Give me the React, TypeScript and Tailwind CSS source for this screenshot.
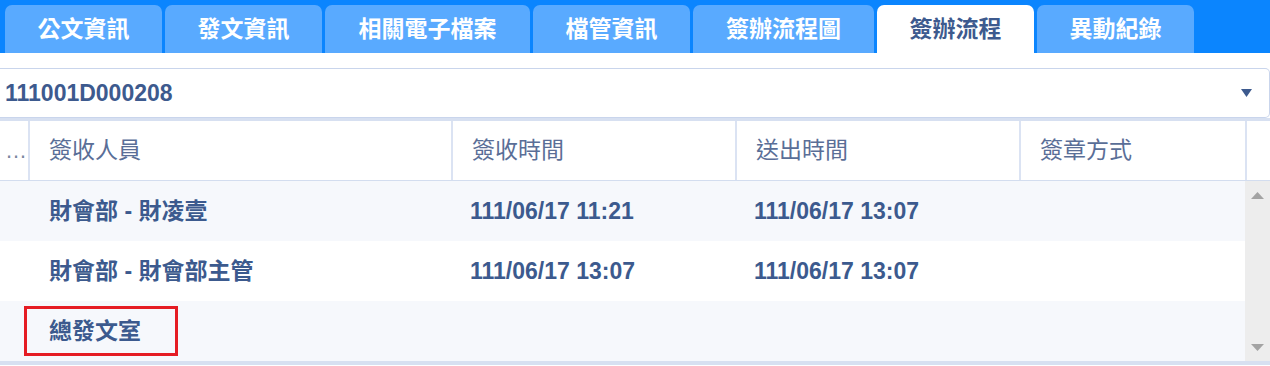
const tabs = [
  { label: '公文資訊', w: 'w-[157px]' },
  { label: '發文資訊', w: 'w-[157px]' },
  { label: '相關電子檔案', w: 'w-[205px]' },
  { label: '檔管資訊', w: 'w-[157px]' },
  { label: '簽辦流程圖', w: 'w-[181px]' },
  { label: '簽辦流程', w: 'w-[157px]', active: true },
  { label: '異動紀錄', w: 'w-[157px]' },
];

const rows = [
  { who: '財會部 - 財凌壹', recv: '111/06/17 11:21', sent: '111/06/17 13:07', method: '' },
  { who: '財會部 - 財會部主管', recv: '111/06/17 13:07', sent: '111/06/17 13:07', method: '' },
  { who: '總發文室', recv: '', sent: '', method: '', marked: true },
];

const font = "font-['Liberation_Sans','Noto_Sans_CJK_TC',sans-serif]";

function TabBar() {
  return (
    <div className="flex h-[53px] items-end gap-[3px] bg-[#0b85fe] pl-[5px]">
      {tabs.map((t) => (
        <div
          key={t.label}
          className={`flex h-[48px] items-center justify-center rounded-t-[7px] text-[23px] font-bold ${t.w} ${
            t.active ? 'bg-white text-[#3d5a8e]' : 'bg-[#59aaff] text-white'
          }`}
        >
          {t.label}
        </div>
      ))}
    </div>
  );
}

function DocSelect() {
  return (
    <div className="mt-[15px] flex h-[50px] items-center rounded-r-[5px] border-y border-r border-[#c9d5ec] pr-[17px] pl-[5px]">
      <span className="flex-1 text-[23px] font-bold text-[#3d5a8e]">111001D000208</span>
      <svg width="11" height="8" viewBox="0 0 11 8">
        <path d="M0 0 L11 0 L5.5 8 Z" fill="#3d5a8e" />
      </svg>
    </div>
  );
}

function SignTable() {
  return (
    <div className="border-t-[3px] border-b-[4px] border-[#d7e0f1]">
      <div className="grid h-[60px] grid-cols-[28px_423px_284px_284px_226px_25px] border-b-[1px] border-[#d3ddef] text-[23px] text-[#5a6e97]">
        <div className="flex items-center pl-[5px] text-[22px] text-[#7a879f]">…</div>
        <div className="flex items-center border-l-[2px] border-[#dbe3f3] pl-[19px]">簽收人員</div>
        <div className="flex items-center border-l-[2px] border-[#dbe3f3] pl-[19px]">簽收時間</div>
        <div className="flex items-center border-l-[2px] border-[#dbe3f3] pl-[19px]">送出時間</div>
        <div className="flex items-center border-l-[2px] border-[#dbe3f3] pl-[19px]">簽章方式</div>
        <div className="border-l-[2px] border-[#dbe3f3]" />
      </div>
      <div className="flex">
        <div className="w-[1245px]">
          {rows.map((r, i) => (
            <div
              key={r.who}
              className={`grid h-[60px] grid-cols-[28px_423px_284px_284px_226px] text-[23px] font-bold text-[#3c5a8e] ${
                i % 2 === 0 ? 'bg-[#f6f8fc]' : 'bg-white'
              }`}
            >
              <div />
              <div className="flex items-center">
                {r.marked ? (
                  <span className="ml-[-4px] flex h-[50px] w-[154px] items-center border-[3px] border-[#e51c24] pl-[22px]">
                    {r.who}
                  </span>
                ) : (
                  <span className="pl-[21px]">{r.who}</span>
                )}
              </div>
              <div className="flex items-center pl-[19px]">{r.recv}</div>
              <div className="flex items-center pl-[19px]">{r.sent}</div>
              <div className="flex items-center pl-[19px]">{r.method}</div>
            </div>
          ))}
        </div>
        <div className="flex w-[25px] flex-col items-center justify-between bg-[#ededed] pt-[11px] pb-[10px]">
          <svg width="13" height="7" viewBox="0 0 13 7">
            <path d="M6.5 0 L13 7 L0 7 Z" fill="#a3a3a3" />
          </svg>
          <svg width="13" height="7" viewBox="0 0 13 7">
            <path d="M0 0 L13 0 L6.5 7 Z" fill="#a3a3a3" />
          </svg>
        </div>
      </div>
    </div>
  );
}

export default function App() {
  return (
    <div className={`h-[366px] w-[1270px] overflow-hidden bg-white ${font}`}>
      <TabBar />
      <DocSelect />
      <SignTable />
    </div>
  );
}
